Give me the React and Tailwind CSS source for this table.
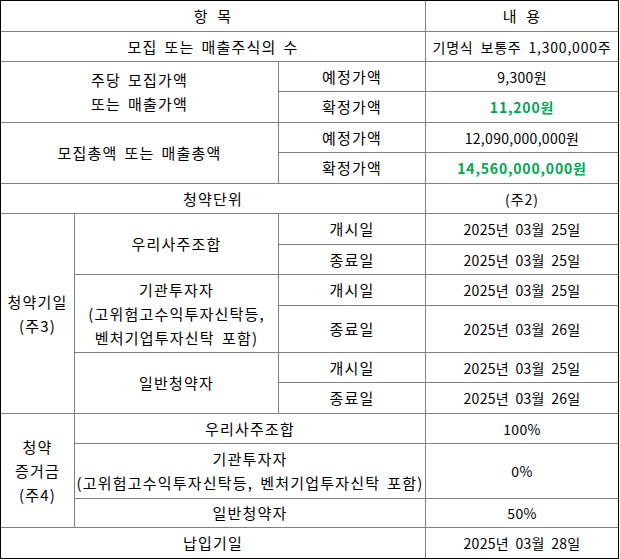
import React from "react";

function L({ className = "", children }) {
  return (
    <div
      className={
        "bg-white flex items-center justify-center text-center text-[15px] tracking-[1.2px] [word-spacing:2.5px] " +
        className
      }
    >
      <div>{children}</div>
    </div>
  );
}

function V({ className = "", children }) {
  return (
    <div
      className={
        "bg-white flex items-center justify-center text-center text-[14px] [word-spacing:3px] " +
        className
      }
    >
      <div>{children}</div>
    </div>
  );
}

const date = (d) => `2025년 03월 ${d}일`;

export default function App() {
  return (
    <div className="w-[619px] h-[559px] font-['Noto_Sans_CJK_KR',sans-serif] leading-[24px] text-black">
      <div className="grid grid-cols-[73px_203px_146px_192px] grid-rows-[30px_29px_29px_30px_29px_30px_29px_30px_29px_30px_46px_29px_30px_29px_54px_28px_30px] gap-px bg-[#808080] border border-black">
        <L className="col-span-3 bg-[#d9d9d9] [word-spacing:4px]">항 목</L>
        <L className="bg-[#d9d9d9] [word-spacing:4px]">내 용</L>

        <L className="col-span-3 tracking-[0.6px]">모집 또는 매출주식의 수</L>
        <V className="tracking-[0.8px]">기명식 보통주 1,300,000주</V>

        <L className="col-span-2 row-span-2">
          주당 모집가액
          <br />
          또는 매출가액
        </L>
        <L>예정가액</L>
        <V className="tracking-[0.3px]">9,300원</V>
        <L>확정가액</L>
        <V className="font-bold tracking-[0.8px] text-[#00a651]">11,200원</V>

        <L className="col-span-2 row-span-2">모집총액 또는 매출총액</L>
        <L>예정가액</L>
        <V className="tracking-[0.3px]">12,090,000,000원</V>
        <L>확정가액</L>
        <V className="font-bold tracking-[0.8px] text-[#00a651]">14,560,000,000원</V>

        <L className="col-span-3">청약단위</L>
        <V className="tracking-[1px]">(주2)</V>

        <L className="row-span-6">
          청약기일
          <br />
          (주3)
        </L>
        <L className="row-span-2">우리사주조합</L>
        <L>개시일</L>
        <V className="tracking-[0.3px]">{date("25")}</V>
        <L>종료일</L>
        <V className="tracking-[0.3px]">{date("25")}</V>
        <L className="row-span-2">
          기관투자자
          <br />
          (고위험고수익투자신탁등,
          <br />
          벤처기업투자신탁 포함)
        </L>
        <L>개시일</L>
        <V className="tracking-[0.3px]">{date("25")}</V>
        <L>종료일</L>
        <V className="tracking-[0.3px]">{date("26")}</V>
        <L className="row-span-2">일반청약자</L>
        <L>개시일</L>
        <V className="tracking-[0.3px]">{date("25")}</V>
        <L>종료일</L>
        <V className="tracking-[0.3px]">{date("26")}</V>

        <L className="row-span-3">
          청약
          <br />
          증거금
          <br />
          (주4)
        </L>
        <L className="col-span-2">우리사주조합</L>
        <V className="tracking-[0.3px]">100%</V>
        <L className="col-span-2">
          기관투자자
          <br />
          (고위험고수익투자신탁등, 벤처기업투자신탁 포함)
        </L>
        <V className="tracking-[0.3px]">0%</V>
        <L className="col-span-2">일반청약자</L>
        <V className="tracking-[0.3px]">50%</V>

        <L className="col-span-3">납입기일</L>
        <V className="tracking-[0.3px]">{date("28")}</V>
      </div>
    </div>
  );
}
